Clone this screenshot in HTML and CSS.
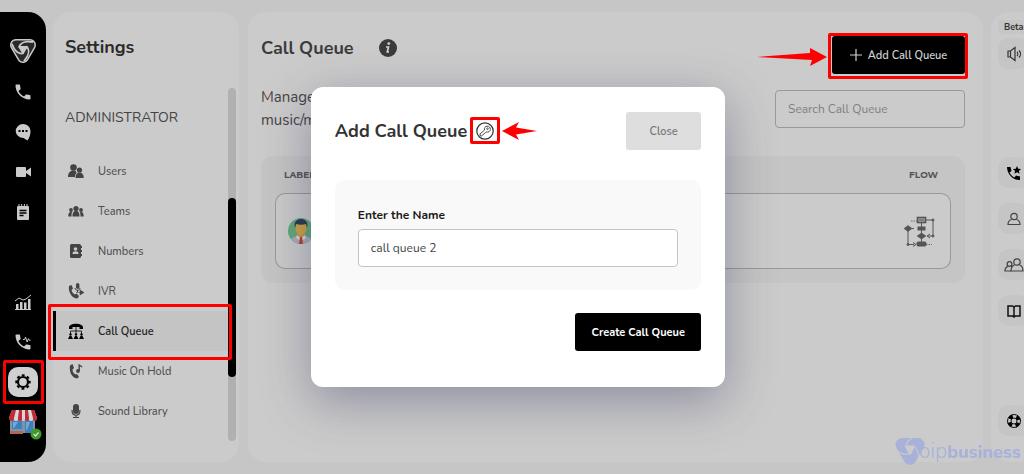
FILE: index.html
```html
<!DOCTYPE html>
<html lang="en">
<head>
    <meta charset="UTF-8">
    <meta name="viewport" content="width=device-width, initial-scale=1.0">
    <title>Call Queue</title>
    <link rel="stylesheet" href="styles.css">
</head>
<body>
    <div class="app">
        <nav class="rail">
            <a href="#" class="rail-logo">
                <svg width="28" height="28" viewBox="0 0 28 28" stroke-linejoin="round">
                    <path d="M7 8h14l-7 12z" fill="#c9c9c9" stroke="#c9c9c9" stroke-width="12"/>
                    <path d="M7 8h14l-7 12z" fill="#2a2a2a" stroke="#2a2a2a" stroke-width="9"/>
                    <path d="M10.500 10h7L14 16z" fill="#c9c9c9" stroke="#c9c9c9" stroke-width="2"/>
                    <g fill="none" stroke="#c9c9c9" stroke-width="1.800">
                        <path d="M10 10.500C11 6 16 3.500 24 5"/>
                        <path d="M10 10.500C11 6 16 3.500 24 5" transform="rotate(120 14 12)"/>
                        <path d="M10 10.500C11 6 16 3.500 24 5" transform="rotate(240 14 12)"/>
                    </g>
                </svg>
            </a>
            <a href="#" class="rail-item">
                <svg width="20" height="20" viewBox="0 0 24 24" fill="#cbcbcb"><path d="M6.600 10.800c1.400 2.800 3.800 5.100 6.600 6.600l2.200-2.200c.3-.3.7-.4 1-.2 1.100.4 2.300.6 3.600.6.6 0 1 .4 1 1V20c0 .6-.4 1-1 1C10.600 21 3 13.400 3 4c0-.6.4-1 1-1h3.500c.6 0 1 .4 1 1 0 1.300.2 2.500.6 3.600.1.300 0 .7-.2 1z"/></svg>
            </a>
            <a href="#" class="rail-item">
                <svg width="18" height="18" viewBox="0 0 18 18"><path d="M9 1a7.500 7 0 0 1 7.500 7c0 3-.5 6-3 9.500L9.500 15A7.500 7 0 1 1 9 1z" fill="#cbcbcb"/><path d="M4.500 7h2v2h-2zM8 7h2v2H8zM11.500 7h2v2h-2z" fill="#000"/></svg>
            </a>
            <a href="#" class="rail-item">
                <svg width="18" height="18" viewBox="0 0 18 18" fill="#cbcbcb"><rect x="2" y="4" width="10" height="10" rx="1"/><path d="M12 8l5-3.500v9L12 10z"/></svg>
            </a>
            <a href="#" class="rail-item">
                <svg width="18" height="18" viewBox="0 0 18 18"><rect x="3" y="3" width="12" height="14" rx="1" fill="#cbcbcb"/><path d="M5 1v3M7.700 1v3M10.400 1v3M13 1v3" stroke="#cbcbcb"/><path d="M5.500 7.500h7M5.500 10h7M5.500 12.500h4" stroke="#000" stroke-width="1.300"/></svg>
            </a>
            <a href="#" class="rail-item rail-bottom">
                <svg width="18" height="18" viewBox="0 0 18 18"><path d="M2 16v-5h2.500v5zM6 16V9h2.500v7zM10 16V9.500h2.500V16zM14 16V6h2.500v10z" fill="#cbcbcb"/><path d="M1 8l4-3 4 2 3-1 5-4" stroke="#cbcbcb" fill="none"/><path d="M1 16.500h16" stroke="#cbcbcb"/></svg>
            </a>
            <a href="#" class="rail-item">
                <svg width="20" height="20" viewBox="0 0 24 24" fill="#cbcbcb"><path d="M6.600 10.800c1.400 2.800 3.800 5.100 6.600 6.600l2.200-2.200c.3-.3.7-.4 1-.2 1.100.4 2.300.6 3.600.6.6 0 1 .4 1 1V20c0 .6-.4 1-1 1C10.600 21 3 13.400 3 4c0-.6.4-1 1-1h3.500c.6 0 1 .4 1 1 0 1.300.2 2.500.6 3.600.1.300 0 .7-.2 1z"/><path d="M12 9h2l1-3 2 6 1.500-4 1 2H21" fill="none" stroke="#cbcbcb" stroke-width="1.200"/></svg>
            </a>
            <a href="#" class="rail-item">
                <span class="rail-gear">
                    <svg width="18" height="18" viewBox="0 0 18 18" fill="none" stroke="#000"><circle cx="9" cy="9" r="5" stroke-width="2.200"/><circle cx="9" cy="9" r="6.700" stroke-width="2" stroke-dasharray="2.900 2.360" stroke-dashoffset="1.450"/></svg>
                </span>
                <span class="mark mark-gear"></span>
            </a>
            <a href="#" class="rail-item rail-store">
                <svg width="30" height="28" viewBox="0 0 30 28">
                    <path d="M2 11h25v14H2z" fill="#7d93ad"/>
                    <path d="M4 13h10v8H4zM17 13h8v12h-8z" fill="#3c81b8"/>
                    <path d="M5 14h5l-4 6H5zM18 14h4l-3 8h-1z" fill="#73a9cf"/>
                    <path d="M2 23h13v3H2z" fill="#b06a52"/>
                    <path d="M4 2h22l3 8H1z" fill="#d8d8d8"/>
                    <path d="M4 2h4l-2 8H1zM11 2h3v8h-4zM17 2h3l1 8h-4zM23 2h3l3 8h-4z" fill="#c22b35"/>
                    <path d="M1 10h5v1a2.500 2 0 0 1-5 0zM10 10h4v1a2 2 0 0 1-4 0zM17 10h4v1a2 2 0 0 1-4 0zM25 10h4v1a2 2 0 0 1-4 0z" fill="#c22b35"/>
                    <path d="M6 10h4v1a2 2 0 0 1-4 0zM14 10h3v1a1.500 2 0 0 1-3 0zM21 10h4v1a2 2 0 0 1-4 0z" fill="#d8d8d8"/>
                </svg>
                <svg class="store-badge" width="12" height="12" viewBox="0 0 12 12"><circle cx="6" cy="6" r="5.500" fill="#3f9a28"/><path d="M3.500 6l2 2 3-3.500" fill="none" stroke="#ddd" stroke-width="1.200"/></svg>
            </a>
        </nav>

        <aside class="settings">
            <h2>Settings</h2>
            <div class="settings-body">
                <div class="settings-list">
                    <h3>ADMINISTRATOR</h3>
                    <a href="#" class="menu-item">
                        <svg width="16" height="16" viewBox="0 0 16 16" fill="#444"><circle cx="5.500" cy="4.500" r="3.300"/><path d="M0 14c0-4 2-6.500 5.500-6.500 2 0 3 1 3 2.500-1 1-1.500 2-1.500 4z"/><circle cx="11.500" cy="7" r="2.600"/><path d="M7.500 15c0-3.500 1.500-5.500 4-5.500s4.300 2 4.300 5.500z"/></svg>
                        Users
                    </a>
                    <a href="#" class="menu-item">
                        <svg width="16" height="16" viewBox="0 0 16 16" fill="#444"><circle cx="8" cy="5.500" r="2.600"/><circle cx="3" cy="7" r="1.900"/><circle cx="13" cy="7" r="1.900"/><path d="M4.500 13.500c0-4 1-5.500 3.500-5.500s3.500 1.500 3.500 5.500zM.3 13.500c0-3.500 1-4.800 4-4.800-.6 1-.8 2-.8 4.800zM15.700 13.500c0-3.500-1-4.800-4-4.800.6 1 .8 2 .8 4.800z"/></svg>
                        Teams
                    </a>
                    <a href="#" class="menu-item">
                        <svg width="16" height="16" viewBox="0 0 16 16"><rect x="2" y="1" width="11" height="14" rx="1.500" fill="#444"/><path d="M13.500 3v2M13.500 7v2M13.500 11v2" stroke="#444"/><circle cx="7.500" cy="6" r="1.800" fill="#cbcbcb"/><path d="M4.500 11c0-2 1-2.700 3-2.700s3 .7 3 2.700z" fill="#cbcbcb"/></svg>
                        Numbers
                    </a>
                    <a href="#" class="menu-item">
                        <svg width="16" height="16" viewBox="0 0 16 16" fill="#444"><path d="M1 3l2.500-1L5 5.500 3.500 7c.5 2 1.500 3.500 3.500 4.500l1.500-1L11 13l-1.500 2.500C4 15.500 0 9 1 3z"/><rect x="8" y="0" width="3.400" height="6" rx="1.700"/><path d="M7 5c0 3 5 3 5 0M9.500 7v2" fill="none" stroke="#444"/><path d="M12 7l4 2.500-4 2.500zM8 9.500h4" stroke="#444" stroke-width=".6"/></svg>
                        IVR
                    </a>
                    <a href="#" class="menu-item active">
                        <svg width="16" height="16" viewBox="0 0 16 16" fill="#000"><path d="M1 4.500c0-5 14-5 14 0V6h-3.500V4h-7v2H1z"/><path d="M8 4v8M2.500 11V8h11v3" fill="none" stroke="#000" stroke-width=".8"/><circle cx="2.500" cy="11.500" r="1.200"/><circle cx="8" cy="11.500" r="1.200"/><circle cx="13.500" cy="11.500" r="1.200"/><path d="M0 16l1.500-3h2L5 16zM5.500 16L7 13h2l1.500 3zM11 16l1.500-3h2l1.500 3z"/></svg>
                        Call Queue
                        <span class="mark mark-menu"></span>
                    </a>
                    <a href="#" class="menu-item">
                        <svg width="16" height="16" viewBox="0 0 16 16" fill="#444"><path d="M2 2.500L4.500 1 6 5 4.500 6.500c0 2 1 4 3 5l1.500-.5 2 3-2 1.500C3.500 15 1 8 2 2.500z"/><circle cx="10" cy="8" r="1.900"/><path d="M11.200 8V2l3 2" fill="none" stroke="#444" stroke-width="1.400"/></svg>
                        Music On Hold
                    </a>
                    <a href="#" class="menu-item">
                        <svg width="16" height="16" viewBox="0 0 16 16" fill="#444"><rect x="5" y="1" width="6" height="10" rx="3"/><path d="M4 7c0 7 8 7 8 0M8 12v2.500M5 14.500h6" fill="none" stroke="#444" stroke-width="1.200"/></svg>
                        Sound Library
                    </a>
                </div>
                <div class="scroll-track"><div class="scroll-thumb"></div></div>
            </div>
        </aside>

        <main class="main">
            <header class="main-head">
                <h1>Call Queue</h1>
                <svg class="info" width="18" height="18" viewBox="0 0 18 18"><circle cx="9" cy="9" r="9" fill="#3b3b3b"/><circle cx="9.800" cy="4.600" r="1.400" fill="#d0d0d0"/><path d="M7 8h2.500l-1.200 5H10" fill="none" stroke="#d0d0d0" stroke-width="1.700"/></svg>
                <button type="button" class="btn-add">
                    <svg width="12" height="12" viewBox="0 0 12 12" stroke="#d0d0d0"><path d="M6 0v12M0 6h12" stroke-width="1.200"/></svg>
                    Add Call Queue
                    <span class="mark mark-add"></span>
                    <svg class="arrow-add" width="70" height="18" viewBox="0 0 70 18"><path d="M0 9l53-4V0l17 9-17 9 2-6z" fill="#f00"/></svg>
                </button>
            </header>
            <div class="main-sub">
                <p>Manage<br>music/m</p>
                <input type="search" class="search" placeholder="Search Call Queue" aria-label="Search Call Queue">
            </div>
            <table class="queues">
                <thead>
                    <tr><th>LABEL</th><th>FLOW</th></tr>
                </thead>
                <tbody>
                    <tr>
                        <td>
                            <svg width="26" height="26" viewBox="0 0 26 26">
                                <defs><clipPath id="face"><circle cx="13" cy="13" r="13"/></clipPath></defs>
                                <g clip-path="url(#face)">
                                    <rect width="26" height="26" fill="#61a978"/>
                                    <path d="M1 26c0-5 4-7 8-8h8c4 1 8 3 8 8z" fill="#a9adb8"/>
                                    <path d="M9 14h8v5l-4 3-4-3z" fill="#c0963b"/>
                                    <ellipse cx="13" cy="10" rx="5.500" ry="7" fill="#cda345"/>
                                    <path d="M7 10c-2-7 3-9 6-9s8 2 6 9l-1-4c-3 1-7 1-10 0z" fill="#28394e"/>
                                    <path d="M9 17l4 3 4-3 1 3-3 2h-4l-3-2z" fill="#d5d5d8"/>
                                    <path d="M12 19h2l1 7h-4z" fill="#c0392b"/>
                                </g>
                            </svg>
                        </td>
                        <td>
                            <svg width="32" height="32" viewBox="0 0 32 32" fill="#555" stroke="#555">
                                <path d="M7 6h6M22 29.500h6" stroke-dasharray="1.500 1" stroke-width=".8"/>
                                <path d="M17.500 8v22M21 5h8v16h-5M10 13.500h-6v16h6" fill="none"/>
                                <rect x="13.500" y="2.500" width="8" height="5" fill="#aaa" stroke-width="1.600"/><path d="M15 5h5"/>
                                <rect x="14" y="12" width="7" height="3"/>
                                <path d="M0 13.500L4 10.500 8 13.500 4 16.500zM13 21l4.500-3 4.500 3-4.500 3z" stroke-width=".6"/>
                                <rect x="13" y="27" width="9" height="4" rx="1"/>
                                <circle cx="29" cy="5" r="1"/><circle cx="29" cy="21" r="1"/><circle cx="4" cy="29.500" r="1"/>
                                <path d="M26 19l-3 2 3 2M9 27.500l3 2-3 2" fill="none"/>
                            </svg>
                        </td>
                    </tr>
                </tbody>
            </table>
        </main>

        <aside class="tools">
            <span class="beta">Beta</span>
            <button type="button" class="tool" aria-label="Sound">
                <svg width="16" height="16" viewBox="0 0 16 16" fill="none" stroke="#333" stroke-width="1.200"><path d="M2 5v6h2.500L9 14.500v-13L4.500 5zM4.500 5v6M11 6c1 1 1 3 0 4M13 4.500c2 2 2 5 0 7"/></svg>
            </button>
            <div class="tool-group">
                <button type="button" class="tool" aria-label="Favourite calls">
                    <svg width="16" height="16" viewBox="0 0 16 16"><path d="M1 2h3.500l1 4-2 1.500c1 2 2.500 3.700 5 5l1.500-2 4 1V15C7 15.500 1 9 1 2z"/><path d="M11 1l1.200 2.700 2.900.3-2.200 1.900.7 2.900L11 7.300 8.400 8.800l.7-2.900L6.900 4l2.900-.3z"/></svg>
                </button>
                <button type="button" class="tool" aria-label="Contact">
                    <svg width="16" height="16" viewBox="0 0 16 16" fill="none" stroke="#444" stroke-width="1.200"><circle cx="8" cy="5.500" r="3.200"/><path d="M5.500 8.500c-2 .5-3.500 2-3.500 5h12c0-3-1.500-4.500-3.500-5"/></svg>
                </button>
                <button type="button" class="tool" aria-label="Contacts">
                    <svg width="20" height="16" viewBox="0 0 20 16" fill="none" stroke="#444" stroke-width="1.200"><circle cx="5.500" cy="7" r="2.400"/><path d="M7 14H1c0-3 1-4 3-4.600M7 9.400l1.300.6"/><circle cx="13" cy="5" r="3.200"/><path d="M10.500 8C8.500 8.600 7 10.500 7 14h12c0-3.500-1.500-5.400-3.500-6"/></svg>
                </button>
                <button type="button" class="tool" aria-label="Guide">
                    <svg width="16" height="16" viewBox="0 0 16 16" fill="none" stroke="#111" stroke-width="1.500"><path d="M2 3h4.500L8 4l1.500-1H14v10H9.500L8 14l-1.500-1H2zM8 4v10"/></svg>
                </button>
            </div>
            <button type="button" class="tool tool-help" aria-label="Help">
                <svg width="16" height="16" viewBox="0 0 16 16" fill="none"><circle cx="8" cy="8" r="5" stroke="#000" stroke-width="3.600" stroke-dasharray="4 3.850" stroke-dashoffset="-1.950"/><circle cx="8" cy="8" r="6.500" stroke="#111"/><circle cx="8" cy="8" r="3" stroke="#111"/></svg>
            </button>
        </aside>

        <div class="overlay">
            <form class="modal">
                <div class="modal-head">
                    <h2>Add Call Queue</h2>
                    <span class="key">
                        <svg width="18" height="18" viewBox="0 0 18 18" fill="none" stroke="#333"><circle cx="9" cy="9" r="8.200" stroke-width="1.200"/><path d="M8.500 8A3 3 0 1 1 10.500 10L9.500 10.500 5.500 14 4 13.500 4 12z" stroke-width=".9"/><circle cx="11.500" cy="6.700" r=".8" stroke-width=".8"/></svg>
                        <span class="mark mark-key"></span>
                        <svg class="arrow-key" width="35" height="20" viewBox="0 0 35 20"><path d="M35 10L14 6.500 17 1 0 10l17 9-3-5.500z" fill="#f00"/></svg>
                    </span>
                    <button type="button" class="btn-close">Close</button>
                </div>
                <div class="modal-body">
                    <label for="queueName">Enter the Name</label>
                    <input type="text" id="queueName" value="call queue 2">
                </div>
                <button type="submit" class="btn-create">Create Call Queue</button>
            </form>
        </div>
    </div>

    <div class="brand">
        <svg width="30" height="30" viewBox="0 0 28 28" stroke-linejoin="round">
            <path d="M6.500 7h15L14 20z" fill="#a8b2d9" stroke="#a8b2d9" stroke-width="12"/>
            <path d="M10.500 9h7L14 15.500z" fill="#cbcbcb" stroke="#cbcbcb" stroke-width="2"/>
            <g fill="none" stroke="#cbcbcb" stroke-width="1">
                <path d="M10 10C10 6 12 3 17 0"/>
                <path d="M10 10C10 6 12 3 17 0" transform="rotate(120 14 11)"/>
                <path d="M10 10C10 6 12 3 17 0" transform="rotate(240 14 11)"/>
            </g>
        </svg>
        <span class="brand-name">oip<b>business</b></span>
    </div>
</body>
</html>
```

FILE: styles.css
```css
* {
    margin: 0;
    padding: 0;
    box-sizing: border-box;
}
body {
    font-family: 'Nunito', 'Lato', sans-serif;
    background: #c6c6c6;
    color: #444;
    overflow: hidden;
}
button, input {
    font-family: inherit;
}
a {
    color: inherit;
    text-decoration: none;
}
svg {
    flex: none;
}

/* the tool bar runs past the right edge of the window */
.app {
    display: flex;
    min-height: 100vh;
    margin-right: -12px;
    padding: 12px 0;
    position: relative;
}

/* red highlights */
.mark {
    position: absolute;
    border: 3px solid #f00;
    border-radius: 2px;
    z-index: 2;
}

.rail {
    display: flex;
    flex-direction: column;
    width: 46px;
    padding: 18px 0 20px;
    background: #000;
    border-radius: 0 18px 18px 0;
}
.rail-logo, .rail-item {
    display: flex;
    align-items: center;
    justify-content: center;
    height: 40px;
    position: relative;
}
.rail-logo {
    height: 42px;
}
.rail-bottom {
    margin-top: auto;
}
.rail-gear {
    display: flex;
    align-items: center;
    justify-content: center;
    width: 30px;
    height: 30px;
    background: #d0d0d0;
    border-radius: 10px;
}
.mark-gear {
    inset: -2px 2px -2px 3px;
}
.store-badge {
    position: absolute;
    right: 4px;
    bottom: 2px;
}

.settings {
    display: flex;
    flex-direction: column;
    width: 186px;
    margin-left: 7px;
    padding: 23px 0 21px;
    background: #cbcbcb;
    border-radius: 18px;
}
.settings h2, .main h1, .modal h2 {
    font-size: 18px;
    line-height: 24px;
    color: #3b3b3b;
}
.settings h2 {
    margin: 0 0 29px 12px;
    color: #2b2b2b;
}
.settings-body {
    display: flex;
    flex: 1;
    padding-right: 3px;
}
.settings-list {
    flex: 1;
    padding-top: 20px;
}
.settings h3 {
    margin: 0 0 23px 12px;
    font-size: 14px;
    font-weight: 400;
    line-height: 20px;
}
.menu-item {
    display: flex;
    align-items: center;
    gap: 14px;
    height: 40px;
    padding-left: 12px;
    border-left: 3px solid transparent;
    font-size: 11px;
    font-weight: 500;
    color: #505050;
    position: relative;
}
.menu-item.active {
    background: #c4c4c4;
    border-left-color: #000;
    font-weight: 600;
    color: #222;
}
.mark-menu {
    inset: -7px -4px -9px -8px;
}
.scroll-track {
    width: 8px;
    background: #b1b1b1;
    border-radius: 4px;
}
.scroll-thumb {
    height: 179px;
    margin-top: 110px;
    background: #000;
    border-radius: 4px;
}

.main {
    flex: 1;
    margin: 0 8px 0 9px;
    padding: 24px 18px 24px 13px;
    background: #cbcbcb;
    border-radius: 18px;
}
.main-head {
    display: flex;
    align-items: flex-start;
}
.info {
    margin: 3px auto 0 25px;
}
.btn-add, .btn-create, .btn-close {
    height: 38px;
    border: none;
    border-radius: 3px;
    font-size: 11px;
    font-weight: 600;
    cursor: pointer;
}
.btn-add {
    display: flex;
    align-items: center;
    justify-content: center;
    gap: 6px;
    width: 133px;
    background: #000;
    color: #d0d0d0;
    position: relative;
}
.mark-add {
    inset: -3px -3px -5px -4px;
}
.arrow-add {
    position: absolute;
    right: 138px;
    top: 12px;
}
.main-sub {
    display: flex;
    justify-content: space-between;
    margin-top: 12px;
}
.main-sub p {
    font-size: 15px;
    line-height: 23px;
}
.search {
    width: 190px;
    height: 38px;
    margin-top: 4px;
    padding: 0 12px;
    background: transparent;
    border: 1px solid #999;
    border-radius: 4px;
    font-size: 12px;
}
.search::placeholder {
    color: #808080;
}
.queues {
    width: 100%;
    margin-top: 24px;
    padding: 0 14px 14px;
    background: #c5c5c5;
    border-radius: 12px;
    border-spacing: 0;
}
.queues th {
    height: 37px;
    padding: 0 13px 0 9px;
    font-family: 'Montserrat', 'Inter', sans-serif;
    font-size: 9px;
    text-align: left;
    color: #555;
}
.queues td {
    height: 76px;
    padding: 0 14px 0 12px;
    background: #cbcbcb;
    border: 1px solid #999;
    vertical-align: middle;
}
.queues td svg {
    display: block;
}
.queues td:first-child {
    border-right: none;
    border-radius: 10px 0 0 10px;
}
.queues td:last-child {
    border-left: none;
    border-radius: 0 10px 10px 0;
}
.queues th:last-child {
    text-align: right;
}
.queues td:last-child svg {
    margin-left: auto;
}

.tools {
    display: flex;
    flex-direction: column;
    width: 45px;
    padding: 8px 7px 26px;
    background: #cbcbcb;
    border-radius: 18px;
}
.beta {
    margin-bottom: 4px;
    padding-left: 6px;
    background: #c6c6c6;
    border-radius: 3px;
    font-size: 9px;
    font-weight: 700;
    line-height: 14px;
    color: #333;
}
.tool {
    display: flex;
    align-items: center;
    justify-content: center;
    width: 31px;
    height: 31px;
    background: #c5c5c5;
    border: none;
    border-radius: 11px;
}
.tool-group {
    display: grid;
    gap: 15px;
    margin-top: 88px;
}
.tool-help {
    margin-top: auto;
}

.overlay {
    position: absolute;
    inset: 0;
    display: flex;
    align-items: center;
    justify-content: center;
}
.modal {
    display: flex;
    flex-direction: column;
    width: 40%;
    min-width: 380px;
    padding: 25px 24px 36px;
    background: #fff;
    border-radius: 12px;
    box-shadow: 0 14px 50px rgba(50, 50, 93, 0.4);
}
.modal-head {
    display: flex;
    align-items: center;
}
.modal h2 {
    color: #333;
}
.key {
    display: flex;
    margin-left: 9px;
    position: relative;
}
.mark-key {
    inset: -5px -6px -4px -6px;
}
.arrow-key {
    position: absolute;
    left: 26px;
    top: -1px;
}
.btn-close {
    width: 75px;
    margin-left: auto;
    background: #dedede;
    color: #777;
}
.modal-body {
    margin: 30px 0 23px;
    padding: 25px 23px 23px;
    background: #f9f9f9;
    border-radius: 10px;
}
.modal-body label {
    display: block;
    margin-bottom: 4px;
    font-size: 12px;
    font-weight: 700;
    line-height: 20px;
    color: #1b1b1b;
}
.modal-body input {
    width: 100%;
    height: 38px;
    padding: 0 12px;
    border: 1px solid #c4c4c4;
    border-radius: 4px;
    font-size: 12px;
    color: #444;
}
.modal .btn-create {
    align-self: flex-end;
    width: 126px;
    background: #000;
    font-weight: 700;
    color: #fff;
}

.brand {
    position: fixed;
    left: calc(100% - 129px);
    bottom: 7px;
    display: flex;
    align-items: center;
    color: #a8b2d9;
}
.brand-name {
    margin-left: -6px;
    font-size: 21px;
    font-weight: 300;
    line-height: 30px;
    white-space: nowrap;
}
.brand-name b {
    font-size: 18px;
    font-weight: 800;
}
```
